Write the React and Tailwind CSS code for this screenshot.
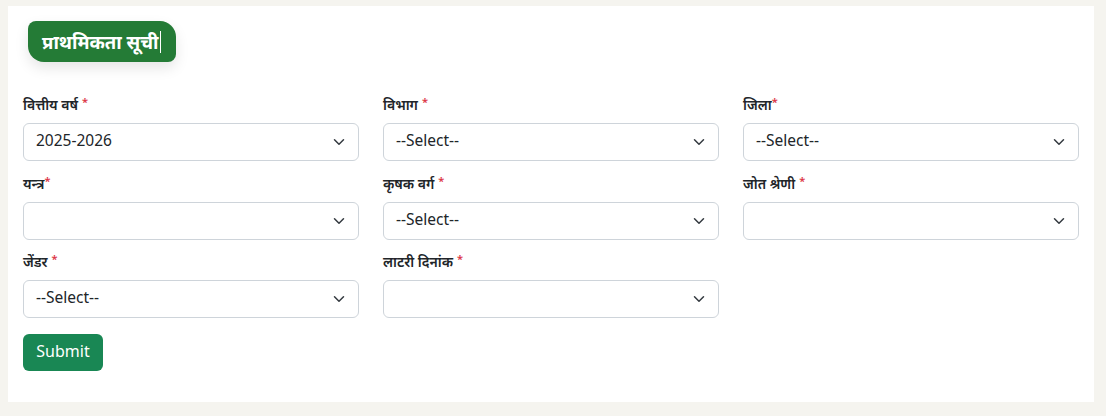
import React from "react";

const Chevron = () => (
  <svg width="16" height="12" viewBox="0 0 16 16" className="shrink-0">
    <path d="m2 5 6 6 6-6" fill="none" stroke="#343a40" strokeWidth="2" strokeLinecap="round" strokeLinejoin="round" />
  </svg>
);

const Field = ({ label, value, starTight }) => (
  <div className="flex flex-col">
    <label className="text-[14px] leading-[20px] font-semibold text-[#212529] mb-[8px] flex items-start">
      <span>{label}</span>
      <span className={`text-[#dc3545] text-[11px] leading-[14px] ${starTight ? "" : "ml-[4px]"}`}>*</span>
    </label>
    <div className="h-[38px] border border-[#ced4da] rounded-[6px] bg-white flex items-center justify-between pl-[12px] pr-[11px] text-[15.5px] text-[#212529]">
      <span className="-mt-[2px]">{value}</span>
      <Chevron />
    </div>
  </div>
);

export default function App() {
  return (
    <div className="min-h-[416px] bg-[#f5f4ef] pt-[6px] px-[8px] pb-[14px]" style={{ fontFamily: '"Noto Sans", "Noto Sans Devanagari", "Open Sans", sans-serif' }}>
      <div className="bg-white px-[15px] pt-[15px] pb-[31px] w-[1086px]">
        <div className="inline-flex items-center h-[41px] ml-[5px] pl-[14px] pr-[15px] bg-[#247b36] text-white text-[18.5px] font-bold rounded-[8px_16px_8px_16px] shadow-[0_6px_14px_rgba(0,0,0,0.10)]">
          <span>प्राथमिकता सूची</span>
          <span className="w-px h-[22px] bg-white ml-[2px]" />
        </div>
        <div className="grid grid-cols-3 gap-x-[24px] gap-y-[12.5px] mt-[33px]">
          <Field label="वित्तीय वर्ष" value="2025-2026" />
          <Field label="विभाग" value="--Select--" />
          <Field label="जिला" value="--Select--" starTight />
          <Field label="यन्त्र" value="" starTight />
          <Field label="कृषक वर्ग" value="--Select--" />
          <Field label="जोत श्रेणी" value="" />
          <Field label="जेंडर" value="--Select--" />
          <Field label="लाटरी दिनांक" value="" />
        </div>
        <button className="mt-[16px] h-[37px] w-[80px] bg-[#198754] text-white text-[16px] rounded-[6px] pb-[3px]">Submit</button>
      </div>
    </div>
  );
}
